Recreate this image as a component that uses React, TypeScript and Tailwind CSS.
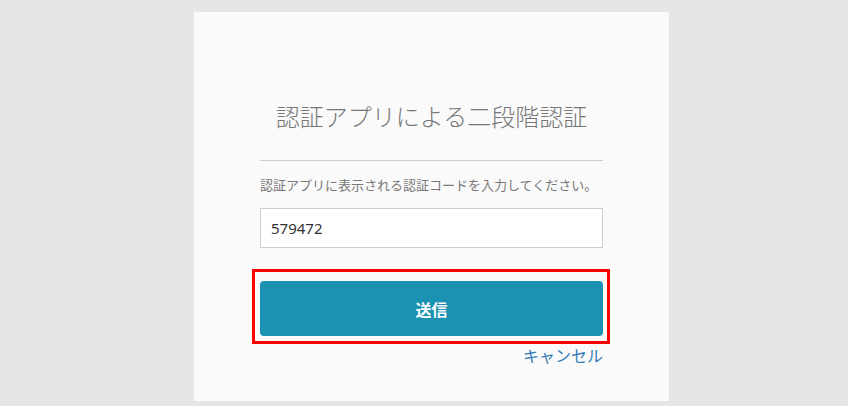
export default function App() {
  const font = { fontFamily: '"Noto Sans CJK JP", "Noto Sans", sans-serif' }
  return (
    <div className="min-h-[406px] bg-[#e6e6e6] pt-3 overflow-hidden" style={font}>
      <div className="ml-[194px] w-[475px] h-[389px] bg-[#fafafa] px-[66px] pt-[86px]">
        <h1 className="text-center text-[24px] leading-[36px] text-[#777777] font-light">
          認証アプリによる二段階認証
        </h1>
        <hr className="mt-[26px] border-0 border-t border-[#cccccc]" />
        <p className="mt-[14px] text-[13px] leading-[20px] text-[#777777]">
          認証アプリに表示される認証コードを入力してください。
        </p>
        <input
          className="mt-[13px] block w-full h-[40px] border border-[#cccccc] bg-white px-[10px] text-[15px] text-[#333333] outline-none"
          defaultValue="579472"
          style={{ fontFamily: '"Noto Sans", "Open Sans", sans-serif' }}
        />
        <div className="relative mt-[33px]">
          <div className="absolute -left-[8px] -right-[7px] -top-[12px] -bottom-[8px] border-[3px] border-[#ff0000] pointer-events-none" />
          <button className="block w-full h-[55px] rounded-[4px] bg-[#1b92b1] text-white text-[16px] font-bold">
            送信
          </button>
        </div>
        <div className="mt-[7px] text-right">
          <a className="text-[16px] leading-[22px] text-[#337ab7]">キャンセル</a>
        </div>
      </div>
    </div>
  )
}
